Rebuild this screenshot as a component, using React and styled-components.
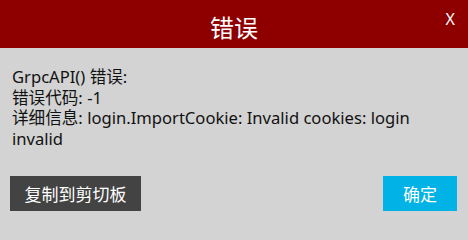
import React from "react";
import styled, { createGlobalStyle } from "styled-components";

const Global = createGlobalStyle`
  html, body { margin: 0; padding: 0; }
  body { background: #d3d3d3; }
`;

const Dialog = styled.div`
  height: 221px;
  width: 468px;
  display: flex;
  flex-direction: column;
  background: #d3d3d3;
  font-family: "Noto Sans", "Noto Sans CJK SC", sans-serif;
  color: #111;
  overflow: hidden;
`;

const Header = styled.div`
  position: relative;
  height: 48px;
  flex-shrink: 0;
  background: #8e0000;
  display: flex;
  align-items: center;
  justify-content: center;
  color: #fff;
`;

const Title = styled.h1`
  margin: 0;
  font-family: "Noto Sans CJK SC", sans-serif;
  font-weight: 400;
  font-size: 24px;
  line-height: 1;
  padding-top: 6px;
`;

const Close = styled.button`
  position: absolute;
  right: 13px;
  top: 8px;
  background: none;
  border: none;
  color: #fff;
  font-family: "Noto Sans", sans-serif;
  font-size: 16px;
  padding: 0;
  cursor: pointer;
`;

const Content = styled.div`
  padding: 19px 24px 0 12px;
  font-size: 16.6px;
  line-height: 20.5px;
`;

const Line = styled.div``;

const Footer = styled.div`
  margin-top: auto;
  display: flex;
  justify-content: space-between;
  padding: 0 11px 10px 10px;
`;

const Button = styled.button`
  height: 35px;
  width: ${(p) => p.$w}px;
  border: none;
  background: ${(p) => p.$bg};
  color: #fff;
  font-family: "Noto Sans CJK SC", sans-serif;
  font-size: 17px;
  padding: 0;
  cursor: pointer;
`;

export default function App() {
  return (
    <>
      <Global />
      <Dialog>
        <Header>
          <Title>错误</Title>
          <Close>X</Close>
        </Header>
        <Content>
          <Line>GrpcAPI() 错误:</Line>
          <Line>错误代码: -1</Line>
          <Line>详细信息: login.ImportCookie: Invalid cookies: login invalid</Line>
        </Content>
        <Footer>
          <Button $w={131} $bg="#434343">复制到剪切板</Button>
          <Button $w={74} $bg="#00b2e6">确定</Button>
        </Footer>
      </Dialog>
    </>
  );
}
